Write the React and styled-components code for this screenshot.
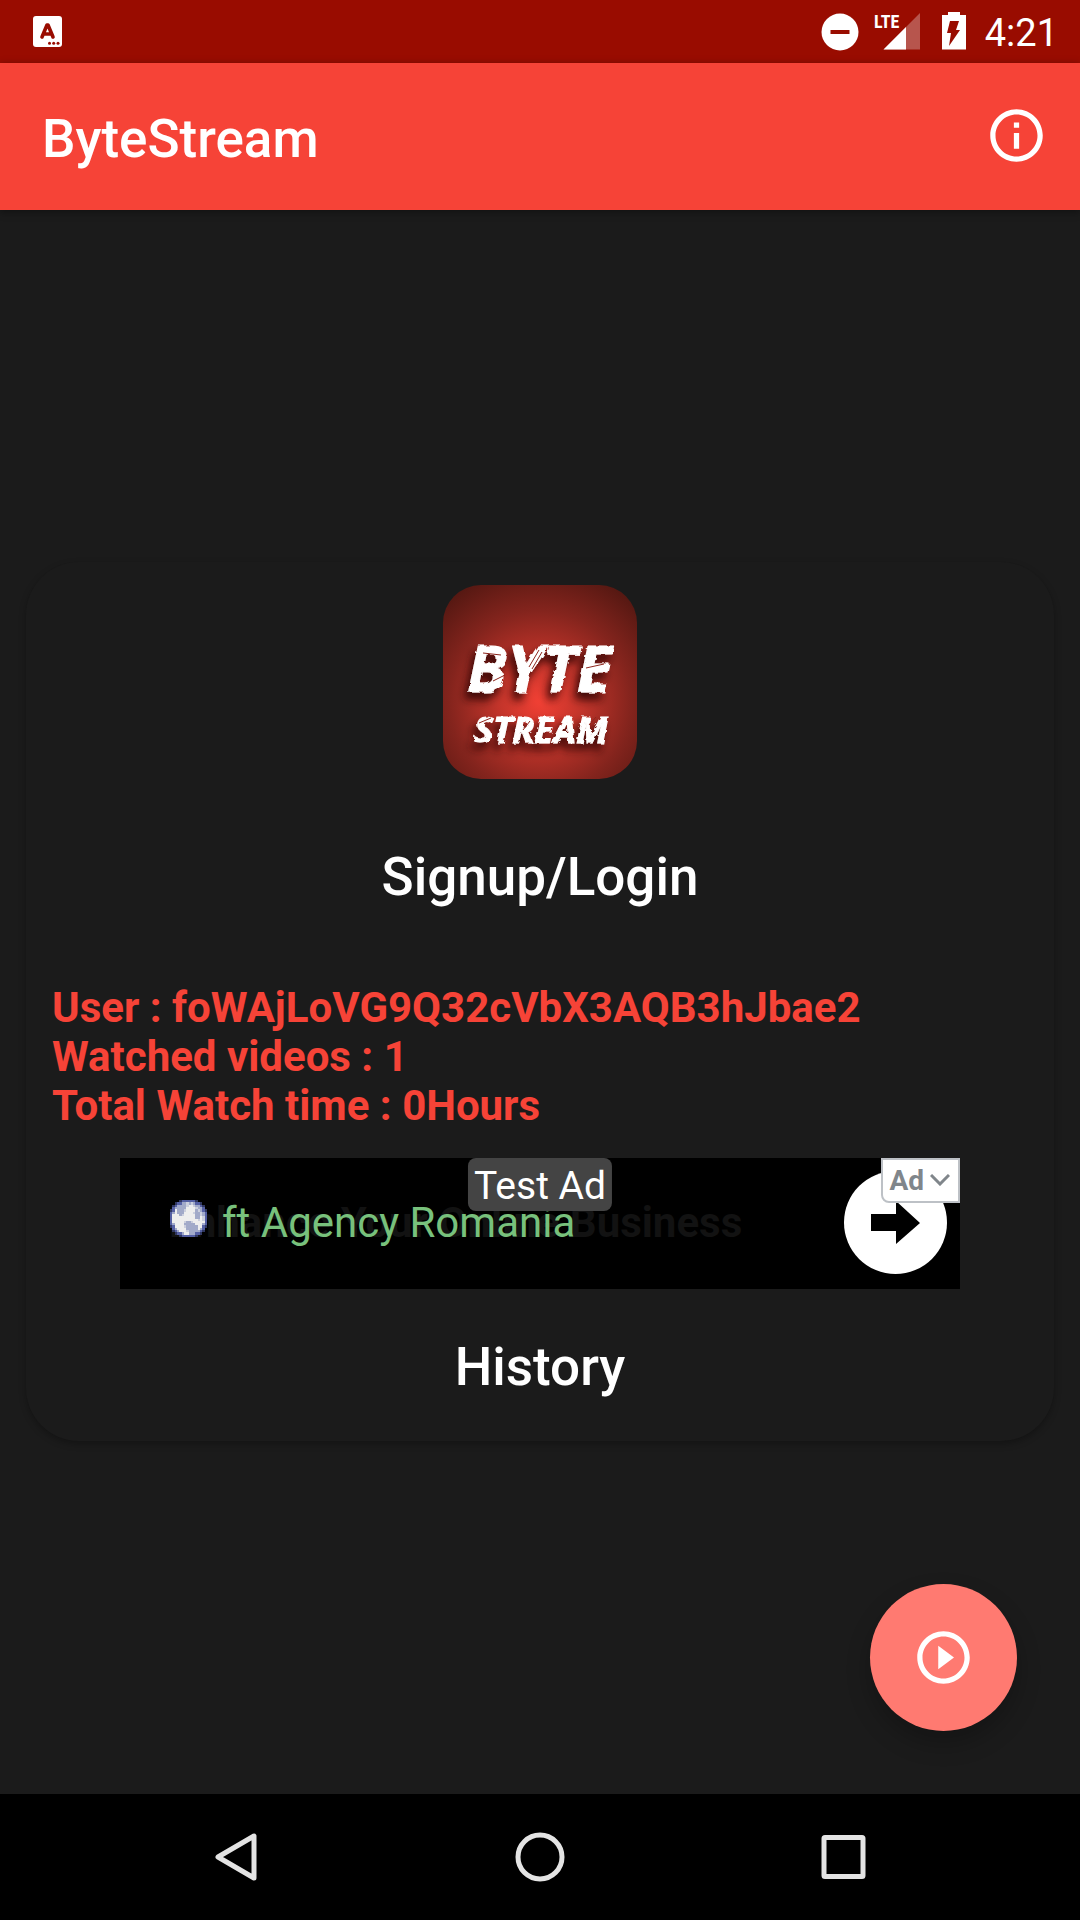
import React from "react";
import styled, { createGlobalStyle } from "styled-components";

const GlobalStyle = createGlobalStyle`
  *, *::before, *::after { box-sizing: border-box; }
  body {
    margin: 0;
    background: #1b1b1b;
    font-family: Roboto, "Liberation Sans", sans-serif;
  }
  svg { display: block; }
`;

const Screen = styled.div`
  display: flex;
  flex-direction: column;
  min-height: 100vh;
  color: #fff;
`;

const StatusBar = styled.div`
  display: flex;
  align-items: center;
  justify-content: space-between;
  height: 63px;
  padding: 0 22px 0 32px;
  background: #990c00;
`;

const StatusIcons = styled.div`
  display: flex;
  align-items: center;
`;

const Clock = styled.time`
  margin-left: 16px;
  padding-top: 2px;
  font-size: 38px;
  line-height: 44px;
`;

const AppBar = styled.header`
  position: relative;
  z-index: 1;
  display: flex;
  align-items: center;
  justify-content: space-between;
  height: 147px;
  padding: 0 32px 2px 42px;
  background: #f64337;
  box-shadow: 0 2px 8px rgba(0, 0, 0, 0.4);
`;

const AppTitle = styled.h1`
  margin: 0;
  padding-top: 6px;
  font-size: 53px;
  font-weight: 500;
  line-height: 62px;
`;

const IconButton = styled.button`
  padding: 0;
  border: 0;
  background: none;
  color: inherit;
  cursor: pointer;
`;

const Content = styled.main`
  position: relative;
  flex: 1;
  display: flex;
  flex-direction: column;
  justify-content: center;
  padding: 26px 26px 28px;
`;

const Card = styled.section`
  display: flex;
  flex-direction: column;
  align-items: center;
  padding: 23px 26px 11px;
  border-radius: 53px;
  background: #1b1b1b;
  box-shadow: 0 3px 7px rgba(0, 0, 0, 0.28);
`;

const ActionButton = styled.button`
  height: 126px;
  padding: 0 42px;
  border: 0;
  background: none;
  color: #fff;
  font: 500 53px/62px Roboto, "Liberation Sans", sans-serif;
  cursor: pointer;
`;

const LogoFrame = styled.div`
  margin-bottom: 35px;
`;

const Stats = styled.div`
  align-self: stretch;
  margin: 43px 0 28px;
  color: #f64337;
  font-size: 42px;
  font-weight: 700;
  line-height: 49px;
`;

const StatLine = styled.p`
  margin: 0;
`;

const AdBanner = styled.aside`
  position: relative;
  display: flex;
  align-items: center;
  justify-content: space-between;
  width: 100%;
  max-width: 840px;
  height: 131px;
  margin-bottom: 15px;
  padding: 0 13px 2px 49px;
  background: #000;
`;

const AdCopy = styled.div`
  display: grid;
  align-items: center;
  font-size: 42px;
  line-height: 49px;
  white-space: nowrap;
`;

const AdHeadline = styled.span`
  grid-area: 1 / 1;
  color: #121212;
  font-weight: 700;
`;

const AdAdvertiser = styled.a`
  grid-area: 1 / 1;
  display: flex;
  gap: 15px;
  padding-left: 1px;
  color: #78c17c;
  text-decoration: none;
`;

const GlobeIcon = styled.svg`
  flex: none;
  margin-top: 2px;
`;

const TestLabel = styled.span`
  position: absolute;
  top: 0;
  left: 50%;
  transform: translateX(-50%);
  padding: 5px 6px 2px;
  border-radius: 8px;
  background: #444;
  font-size: 39px;
  line-height: 46px;
  white-space: nowrap;
`;

const AdChoice = styled.button`
  position: absolute;
  top: 0;
  right: 0;
  display: flex;
  align-items: center;
  gap: 6px;
  height: 45px;
  padding: 0 8px 0 6px;
  border: 2px solid #bdc1c6;
  border-radius: 0 0 0 8px;
  background: #fff;
  color: #80868b;
  font: 700 28px/33px Roboto, "Liberation Sans", sans-serif;
`;

const Fab = styled.button`
  position: absolute;
  right: 63px;
  bottom: 63px;
  display: grid;
  place-items: center;
  width: 147px;
  height: 147px;
  padding: 0;
  border: 0;
  border-radius: 50%;
  background: #ff7a71;
  color: #fff;
  box-shadow: 0 12px 24px rgba(0, 0, 0, 0.24);
  cursor: pointer;
`;

const NavBar = styled.nav`
  display: flex;
  height: 126px;
  padding: 0 8%;
  background: #000;
`;

const NavButton = styled.button`
  flex: 1;
  display: grid;
  place-items: center;
  padding: 0;
  border: 0;
  background: none;
  color: #e4e4e4;
`;

const KeyboardIcon = () => (
  <svg width="32" height="32" viewBox="0 0 32 32" aria-hidden="true">
    <rect x="1" y="0" width="29" height="31" rx="3" fill="#fff" />
    <path d="M10 21 15 9h1l5 12M12 18h7" fill="none" stroke="#990c00" strokeWidth="3.6" strokeLinecap="round" strokeLinejoin="round" />
    <g fill="#990c00">
      <circle cx="17.5" cy="27.3" r="1.5" />
      <circle cx="21.7" cy="27.3" r="1.5" />
      <circle cx="26" cy="27.3" r="1.5" />
    </g>
  </svg>
);

const SignalIcons = () => (
  <svg width="150" height="63" viewBox="820 0 150 63" aria-hidden="true">
    <circle cx="841" cy="32" r="18.5" fill="#fff" />
    <rect x="831.5" y="30" width="19" height="4" fill="#990c00" />
    <path d="M921 13v36.500h-36.500z" fill="#fff" opacity="0.3" />
    <path d="M907 27v22.500h-22.500z" fill="#fff" />
    <text x="875" y="28" fill="#fff" fontFamily="'Roboto Condensed', 'Liberation Sans Narrow', Roboto, sans-serif" fontWeight="700" fontSize="18">LTE</text>
    <path d="M949 15v-3h12v3h6v34.500h-24V15z" fill="#fff" />
    <path d="M951 21h9l-3 9h4l-11 16 2-13h-4z" fill="#990c00" />
  </svg>
);

const InfoIcon = () => (
  <svg width="63" height="63" viewBox="0 0 24 24" fill="currentColor" aria-hidden="true">
    <path d="M11 7h2v2h-2zm0 4h2v6h-2zm1-9C6.480 2 2 6.480 2 12s4.480 10 10 10 10-4.480 10-10S17.520 2 12 2zm0 18c-4.410 0-8-3.590-8-8s3.590-8 8-8 8 3.590 8 8-3.590 8-8 8z" />
  </svg>
);

const PlayIcon = () => (
  <svg width="63" height="63" viewBox="0 0 24 24" fill="currentColor" aria-hidden="true">
    <path d="M10 16.500l6-4.500-6-4.500zM12 2C6.480 2 2 6.480 2 12s4.480 10 10 10 10-4.480 10-10S17.520 2 12 2zm0 18c-4.410 0-8-3.590-8-8s3.590-8 8-8 8 3.590 8 8-3.590 8-8 8z" />
  </svg>
);

const Logo = () => (
  <svg width="194" height="194" viewBox="0 0 194 194" role="img" aria-label="ByteStream logo">
    <defs>
      <radialGradient id="glow" cx="0.5" cy="0.6" r="0.72">
        <stop offset="0" stopColor="#f24034" />
        <stop offset="0.3" stopColor="#c2342a" />
        <stop offset="0.65" stopColor="#84241d" />
        <stop offset="1" stopColor="#521711" />
      </radialGradient>
      <filter id="brush" x="-10%" y="-20%" width="120%" height="150%">
        <feTurbulence type="fractalNoise" baseFrequency="0.14 0.16" numOctaves="2" seed="4" result="noise" />
        <feDisplacementMap in="SourceGraphic" in2="noise" scale="4" result="rough" />
        <feDropShadow in="rough" dx="-4" dy="7" stdDeviation="4" floodColor="#250503" floodOpacity="0.85" />
      </filter>
    </defs>
    <rect width="194" height="194" rx="38" fill="url(#glow)" />
    <g filter="url(#brush)" fill="#fff" stroke="#fff" strokeWidth="1" fontFamily="'Liberation Sans Narrow', 'Open Sans', Roboto, sans-serif" fontWeight="700" fontStyle="italic">
      <text x="24" y="107" fontSize="64">BYTE</text>
      <text x="31" y="158" fontSize="36">STREAM</text>
    </g>
    <g stroke="#8d251c" strokeWidth="1" fill="none">
      <path d="M40 68l18 2M50 96l12-6M86 82l10-17M89 84l10-17M143 83l18-4" />
      <path d="M36 138l12-5M80 145l7-9M146 140l7-8" />
    </g>
  </svg>
);

const GLOBE_COLORS = {
  d: "#30375f",
  b: "#5560a4",
  m: "#a2aac9",
  l: "#ccd0de",
  w: "#eeeeee",
};

const GLOBE_ROWS = [
  "....dbbbbbbd....",
  "..dbbmmlmlmbbd..",
  ".dbmmmmlwwlmmbd.",
  ".bmmmmmwwwwlmmb.",
  "dbwmmmlwwwwmlmbd",
  "bmwmmmwwwwlmmlmb",
  "bwwwmlwwwwwmmlmb",
  "bwwwwwwwwwwmmwlb",
  "bwwwwwwwwwwwlwlb",
  "bwwwwwlmmlwwwwwb",
  "bmwwwwmmmmmwwwmb",
  "dbwwwwlmmmmmwwbd",
  ".bmwwwwmmmmmwmb.",
  ".dbmwwwlmmmmmbd.",
  "..dbbmwwmmmbbd..",
  "....dbbbbbbd....",
];

const Globe = () => (
  <GlobeIcon width="37" height="37" viewBox="0 0 16 16" shapeRendering="crispEdges" aria-hidden="true">
    {GLOBE_ROWS.flatMap((row, y) =>
      [...row].map((cell, x) =>
        GLOBE_COLORS[cell] ? (
          <rect key={`${x}-${y}`} x={x} y={y} width="1" height="1" fill={GLOBE_COLORS[cell]} />
        ) : null
      )
    )}
  </GlobeIcon>
);

const ArrowBadge = () => (
  <svg width="103" height="103" viewBox="0 0 103 103" aria-hidden="true">
    <circle cx="51.5" cy="51.5" r="51.5" fill="#fff" />
    <path d="M27 43h25V30l24 22-24 21V60H27z" fill="#000" />
  </svg>
);

const Chevron = () => (
  <svg width="20" height="12" viewBox="0 0 20 12" aria-hidden="true">
    <path d="M1 1l9 9 9-9" fill="none" stroke="currentColor" strokeWidth="3" />
  </svg>
);

const NAV_ITEMS = [
  { label: "Back", shape: <path d="M43 6v42L7 27z" /> },
  { label: "Home", shape: <circle cx="27" cy="27" r="22" /> },
  { label: "Recent apps", shape: <rect x="9" y="7.500" width="39" height="39" rx="1" /> },
];

export default function App() {
  return (
    <Screen>
      <GlobalStyle />
      <StatusBar>
        <KeyboardIcon />
        <StatusIcons>
          <SignalIcons />
          <Clock>4:21</Clock>
        </StatusIcons>
      </StatusBar>
      <AppBar>
        <AppTitle>ByteStream</AppTitle>
        <IconButton aria-label="About">
          <InfoIcon />
        </IconButton>
      </AppBar>
      <Content>
        <Card>
          <LogoFrame>
            <Logo />
          </LogoFrame>
          <ActionButton>Signup/Login</ActionButton>
          <Stats>
            <StatLine>User : foWAjLoVG9Q32cVbX3AQB3hJbae2</StatLine>
            <StatLine>Watched videos : 1</StatLine>
            <StatLine>Total Watch time : 0Hours</StatLine>
          </Stats>
          <AdBanner>
            <AdCopy>
              <AdHeadline>Enhance Your Online Business</AdHeadline>
              <AdAdvertiser href="#ad">
                <Globe />
                ft Agency Romania
              </AdAdvertiser>
            </AdCopy>
            <IconButton aria-label="Open ad">
              <ArrowBadge />
            </IconButton>
            <TestLabel>Test Ad</TestLabel>
            <AdChoice>
              Ad
              <Chevron />
            </AdChoice>
          </AdBanner>
          <ActionButton>History</ActionButton>
        </Card>
        <Fab aria-label="Play video">
          <PlayIcon />
        </Fab>
      </Content>
      <NavBar>
        {NAV_ITEMS.map(({ label, shape }) => (
          <NavButton key={label} aria-label={label}>
            <svg width="54" height="54" viewBox="0 0 54 54" fill="none" stroke="currentColor" strokeWidth="5" strokeLinejoin="round">
              {shape}
            </svg>
          </NavButton>
        ))}
      </NavBar>
    </Screen>
  );
}
